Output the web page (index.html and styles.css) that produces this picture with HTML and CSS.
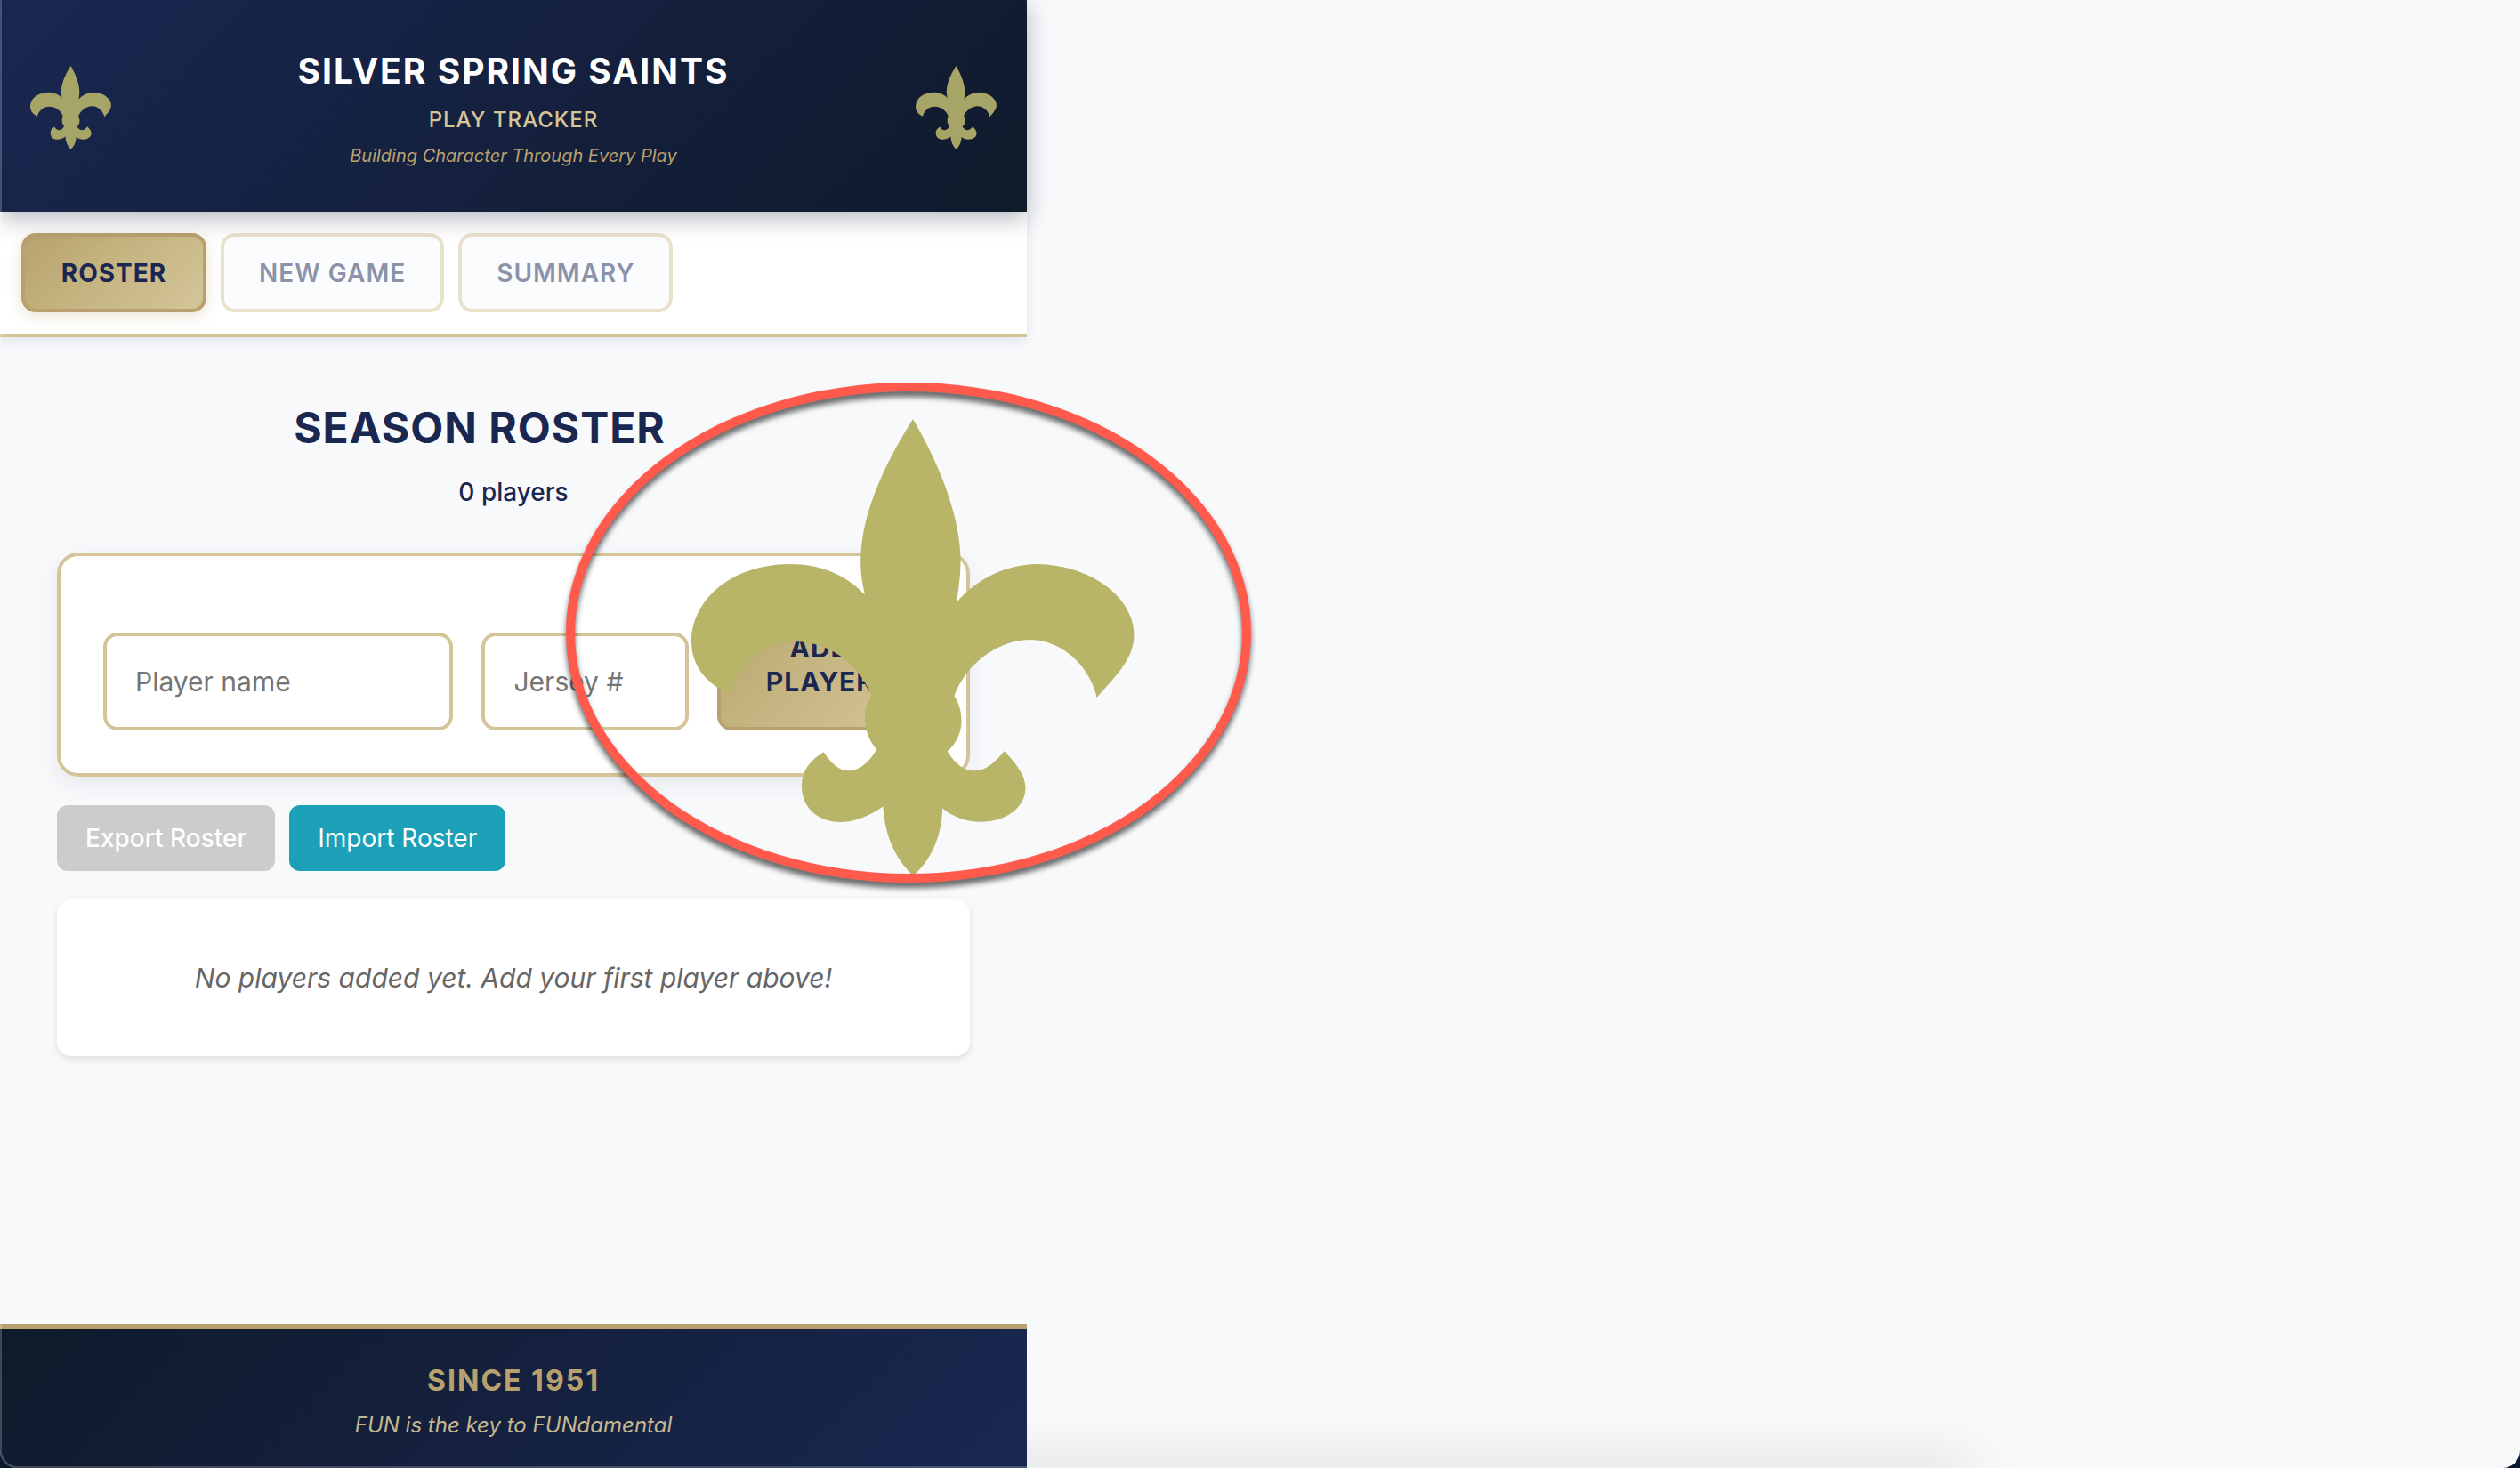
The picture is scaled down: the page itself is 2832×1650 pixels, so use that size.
FILE: index.html
```html
<!DOCTYPE html>
<html lang="en">
<head>
<meta charset="utf-8">
<title>Silver Spring Saints Play Tracker</title>
<link rel="stylesheet" href="styles.css">
</head>
<body>
<svg class="defs" width="0" height="0" aria-hidden="true">
  <symbol id="fleur" viewBox="0 0 498 514">
    <path transform="scale(.5102 .3827) translate(-309 -132)" d="M797 132C840 230 899 390 902 540C902 590 898 630 893 670C940 600 1000 560 1070 558C1200 562 1284 665 1284 765C1284 840 1240 890 1202 950C1185 850 1120 780 1055 780C980 780 910 860 888 945C898 965 904 990 904 1020C904 1050 893 1085 873 1108C890 1145 910 1165 932 1165C955 1165 975 1145 998 1107C1030 1150 1045 1185 1045 1215C1045 1270 1005 1315 945 1315C915 1315 885 1300 862 1275C861 1350 840 1425 797 1473C755 1420 735 1350 731 1270C700 1300 665 1316 638 1316C585 1316 552 1270 552 1210C552 1165 570 1135 600 1110C618 1145 635 1165 655 1165C680 1165 700 1140 717 1103C700 1075 691 1045 691 1010C691 985 695 965 705 945C680 850 610 786 540 786C470 786 410 850 394 943C345 910 309 860 309 785C309 670 390 560 525 558C595 558 650 590 691 648C685 610 681 580 682 540C685 390 748 235 797 132Z"/>
  </symbol>
</svg>
<div class="window">
  <div class="app">
    <header class="banner">
      <svg class="crest" aria-hidden="true"><use href="#fleur"/></svg>
      <div class="banner-text">
        <h1 class="team">SILVER SPRING SAINTS</h1>
        <p class="product">PLAY TRACKER</p>
        <p class="motto">Building Character Through Every Play</p>
      </div>
      <svg class="crest" aria-hidden="true"><use href="#fleur"/></svg>
    </header>
    <nav class="tabs">
      <button class="tab tab-active" type="button">ROSTER</button>
      <button class="tab" type="button" disabled>NEW GAME</button>
      <button class="tab" type="button" disabled>SUMMARY</button>
    </nav>
    <main class="content">
      <h2 class="title">SEASON ROSTER</h2>
      <p class="count">0 players</p>
      <form class="add-form">
        <input class="field" type="text" placeholder="Player name" aria-label="Player name">
        <input class="field" type="text" placeholder="Jersey #" aria-label="Jersey number">
        <button class="add" type="button">ADD PLAYER</button>
        <svg class="watermark" aria-hidden="true"><use href="#fleur"/></svg>
      </form>
      <div class="actions">
        <button class="action action-export" type="button" disabled>Export Roster</button>
        <button class="action action-import" type="button">Import Roster</button>
      </div>
      <p class="empty">No players added yet. Add your first player above!</p>
    </main>
    <footer class="footer">
      <p class="since">SINCE 1951</p>
      <p class="slogan">FUN is the key to FUNdamental</p>
    </footer>
  </div>
  <div class="ring"></div>
</div>
</body>
</html>
```
FILE: styles.css
```css
* { box-sizing: border-box; }
body {
  margin: 0;
  background: #0b1a2e;
  font-family: Inter, "Liberation Sans", sans-serif;
  color: #1a2751;
}
h1, h2, p { margin: 0; }
button, input { font-family: inherit; }
.defs { position: absolute; }
.window {
  position: relative;
  min-height: 100vh;
  overflow: hidden;
  border-radius: 0 0 20px 20px;
  background: #f8f9fb;
}
/* Soft shade along the bottom edge */
.window::before {
  content: "";
  position: absolute;
  bottom: -20px;
  left: 0;
  width: 78%;
  height: 20px;
  box-shadow: 0 0 60px 8px rgba(0, 0, 0, .12);
}
.window::after {
  content: "";
  position: absolute;
  z-index: 2;
  inset: 0;
  border: 2px solid rgba(255, 255, 255, .2);
  border-top: 0;
  border-radius: 0 0 20px 20px;
  pointer-events: none;
}
.app {
  position: relative;
  z-index: 1;
  display: flex;
  flex-direction: column;
  width: 40.75%;
  min-width: 960px;
  min-height: 100vh;
}
.banner {
  position: relative;
  z-index: 1;
  display: flex;
  align-items: center;
  justify-content: space-between;
  padding: 50px 34px 47px;
  background: linear-gradient(135deg, #1a2751, #0f1a2b);
  box-shadow: 0 8px 24px rgba(15, 26, 43, .3);
}
.crest { width: 91px; height: 94px; fill: #a6a466; }
.banner-text { padding-top: 4px; text-align: center; }
.team {
  margin-bottom: 13px;
  font-size: 39px;
  line-height: 52px;
  font-weight: 700;
  letter-spacing: 2px;
  color: #fff;
}
.product {
  margin-bottom: 8px;
  font-size: 24px;
  line-height: 32px;
  font-weight: 500;
  letter-spacing: 1px;
  color: #d4c598;
}
.motto { font-size: 20px; line-height: 32px; font-style: italic; color: #b8a16f; }
.tabs {
  display: flex;
  gap: 16px;
  padding: 24px;
  background: #fff;
  border-bottom: 4px solid #d4c598;
  box-shadow: 0 4px 12px rgba(26, 39, 81, .1);
}
.tab {
  min-width: 208px;
  height: 89px;
  padding: 0 39px;
  border: 4px solid #e9e2cb;
  border-radius: 16px;
  background: #fbfcfe;
  font-size: 28px;
  font-weight: 600;
  letter-spacing: 1px;
  color: #8c93a8;
}
.tab-active {
  border-color: #b8a16f;
  background: linear-gradient(135deg, #b8a16f, #c2b17c 35%, #d4c598);
  box-shadow: 0 4px 16px rgba(184, 161, 111, .3);
  color: #1a2751;
  font-weight: 700;
}
.content {
  flex: 1;
  display: flex;
  flex-direction: column;
  padding: 70px 64px 64px;
}
.title {
  padding-right: 76px;
  text-align: center;
  font-size: 48px;
  line-height: 64px;
  font-weight: 700;
  letter-spacing: 1px;
}
.count {
  margin: 20px 0 48px;
  text-align: center;
  font-size: 28px;
  line-height: 40px;
  font-weight: 500;
}
.add-form {
  position: relative;
  display: grid;
  grid-template-columns: 393fr 232fr 232fr;
  align-items: end;
  gap: 32px;
  padding: 48px;
  border: 4px solid #d4c598;
  border-radius: 24px;
  background: #fff;
  box-shadow: 0 8px 24px rgba(26, 39, 81, .08);
}
.field {
  min-width: 0;
  height: 110px;
  padding: 0 32px;
  border: 4px solid #d4c598;
  border-radius: 16px;
  background: #fff;
  font-size: 30px;
  color: #1a2751;
}
.field::placeholder { color: #757575; }
.add {
  padding: 32px 40px;
  border: 4px solid #b8a16f;
  border-radius: 16px;
  background: linear-gradient(135deg, #b8a16f, #c2b17c 35%, #d4c598);
  font-size: 30px;
  line-height: 38px;
  font-weight: 700;
  letter-spacing: 1px;
  color: #1a2751;
}
/* Oversized crest that hangs over the corner of the form */
.watermark {
  position: absolute;
  top: -154px;
  right: -189px;
  width: 498px;
  height: 514px;
  fill: #b8b468;
}
.actions { display: flex; gap: 16px; margin: 32px 0; }
.action {
  height: 74px;
  padding: 0 32px;
  border: 0;
  border-radius: 12px;
  font-size: 28px;
  color: #fff;
}
.action-export { background: #ccc; font-weight: 500; }
.action-import { background: #1ba0b8; }
.empty {
  padding: 64px;
  border-radius: 16px;
  background: #fff;
  box-shadow: 0 4px 8px rgba(0, 0, 0, .1);
  text-align: center;
  font-size: 30px;
  line-height: 48px;
  font-style: italic;
  color: #666;
}
.footer {
  display: flex;
  flex-direction: column;
  gap: 8px;
  padding: 36px 32px 28px;
  border-top: 6px solid #b8a16f;
  background: linear-gradient(135deg, #0f1a2b, #1a2751);
  text-align: center;
}
.since { font-size: 32px; line-height: 44px; font-weight: 700; letter-spacing: 2px; color: #b8a16f; }
.slogan { font-size: 24px; line-height: 40px; font-style: italic; color: #c5b88f; }
/* Red callout ring */
.ring {
  position: absolute;
  z-index: 1;
  top: 430px;
  left: 636px;
  width: 770px;
  height: 562px;
  border: 10px solid #ff5a4b;
  border-radius: 50%;
  filter: drop-shadow(0 6px 3px rgba(0, 0, 0, .6));
}
```
